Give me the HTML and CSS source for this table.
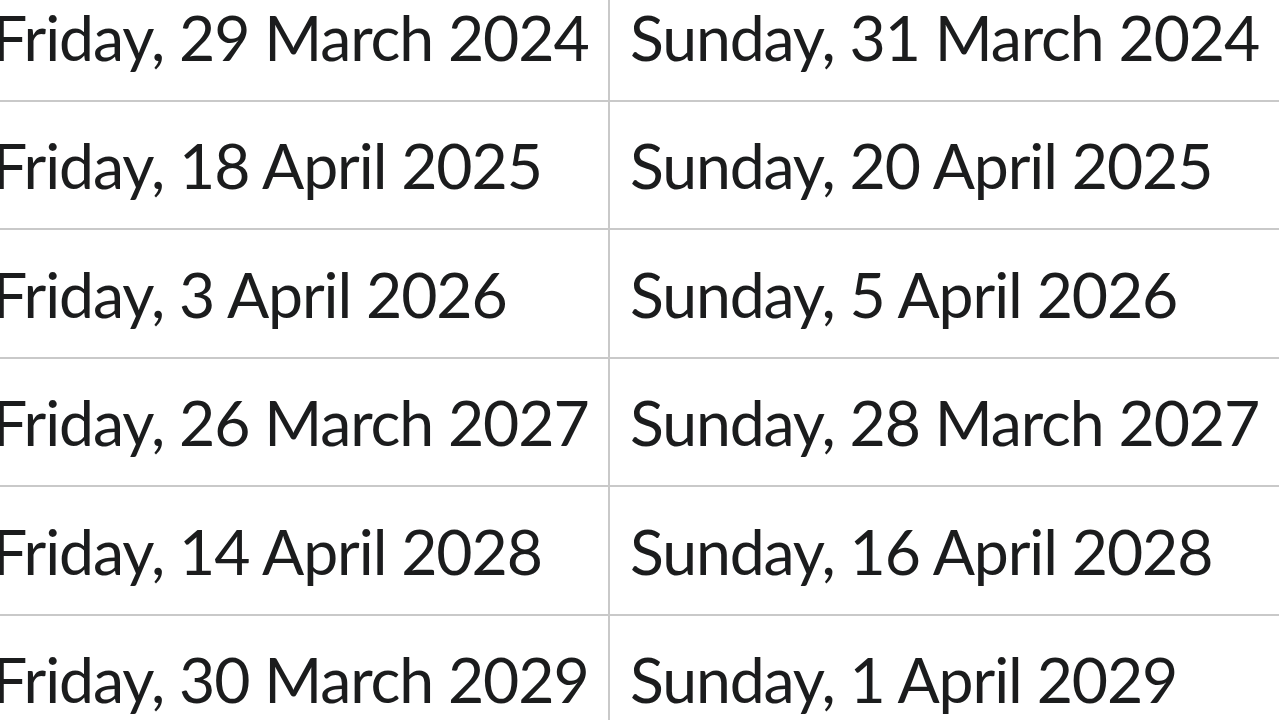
FILE: index.html
```html
<!DOCTYPE html>
<html lang="en">
<head>
<meta charset="utf-8">
<title>Easter dates</title>
<link rel="stylesheet" href="styles.css">
</head>
<body>
<div class="dates">
  <div class="cell left">Friday, 29 March 2024</div>
  <div class="cell right">Sunday, 31 March 2024</div>
  <div class="cell left">Friday, 18 April 2025</div>
  <div class="cell right">Sunday, 20 April 2025</div>
  <div class="cell left">Friday, 3 April 2026</div>
  <div class="cell right">Sunday, 5 April 2026</div>
  <div class="cell left">Friday, 26 March 2027</div>
  <div class="cell right">Sunday, 28 March 2027</div>
  <div class="cell left">Friday, 14 April 2028</div>
  <div class="cell right">Sunday, 16 April 2028</div>
  <div class="cell left">Friday, 30 March 2029</div>
  <div class="cell right">Sunday, 1 April 2029</div>
</div>
</body>
</html>
```
FILE: styles.css
```css
html, body {
  margin: 0;
  padding: 0;
  background: #ffffff;
  overflow: hidden;
}

.dates {
  display: grid;
  grid-template-columns: 638px 700px;
  margin-left: -30px;
  margin-top: -27px;
  font-family: "Lato", "Noto Sans", sans-serif;
  font-size: 62.5px;
  letter-spacing: -1.1px;
  color: #1b1c1d;
}

.cell {
  box-sizing: content-box;
  height: 126.5px;
  border-bottom: 2px solid #c9c9c9;
  display: flex;
  align-items: center;
  white-space: nowrap;
}

.left {
  padding-left: 22px;
}

.right {
  border-left: 2px solid #c9c9c9;
  padding-left: 20px;
}
```
